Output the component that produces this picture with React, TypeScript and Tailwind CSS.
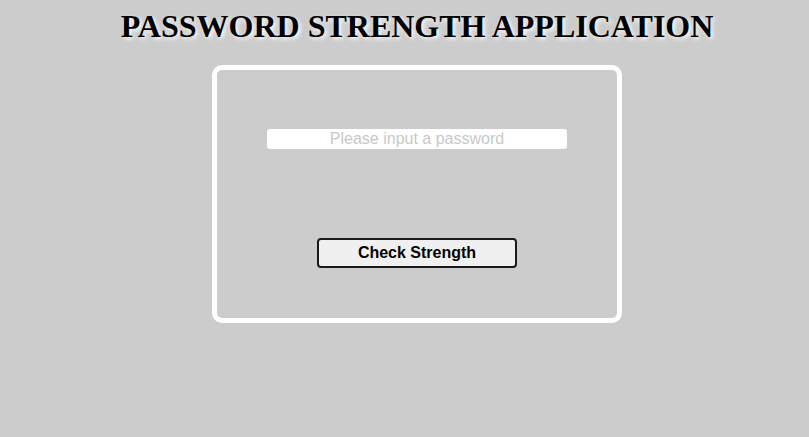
import { useState } from "react";

export default function App() {
  const [password, setPassword] = useState("");

  return (
    <div className="min-h-[437px] w-full bg-[#cccccc]">
      <div className="flex w-[834px] flex-col items-center">
        <h1 className="mt-[8px] font-['Liberation_Serif',serif] text-[32px] font-bold leading-[37px] text-black [text-shadow:2px_2px_4px_#ffffff]">
          PASSWORD STRENGTH APPLICATION
        </h1>
        <div className="mt-[20px] flex h-[258px] w-[410px] flex-col items-center rounded-[10px] border-[5px] border-white">
          <input
            type="password"
            value={password}
            onChange={(e) => setPassword(e.target.value)}
            placeholder="Please input a password"
            className="mt-[59px] h-[20px] w-[300px] rounded-[3px] bg-white text-center font-['Liberation_Sans',sans-serif] text-[16px] outline-none placeholder:text-[#c8c8c8]"
          />
          <button className="mt-[89px] h-[30px] w-[200px] rounded-[4px] border-2 border-[#1a1a1a] bg-[#f0f0f0] font-['Liberation_Sans',sans-serif] text-[16px] font-bold text-black">
            Check Strength
          </button>
        </div>
      </div>
    </div>
  );
}
